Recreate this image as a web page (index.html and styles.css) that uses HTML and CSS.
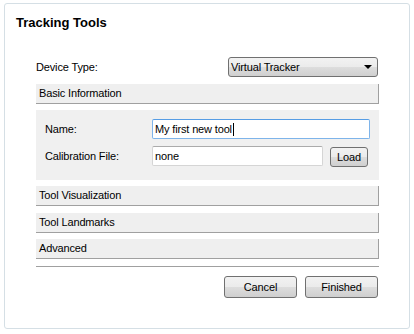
FILE: index.html
```html
<!DOCTYPE html>
<html>
<head>
<meta charset="utf-8">
<link rel="stylesheet" href="styles.css">
</head>
<body>
<div class="window">
  <div class="title">Tracking Tools</div>
  <div class="content">
    <div class="device-row">
      <span class="label">Device Type:</span>
      <div class="combo">
        <span>Virtual Tracker</span>
        <span class="arrow"></span>
      </div>
    </div>
    <div class="section first">Basic Information</div>
    <div class="panel">
      <div class="field-row">
        <span class="field-label">Name:</span>
        <div class="input focused"><span>My first new tool</span><span class="caret"></span></div>
      </div>
      <div class="field-row">
        <span class="field-label">Calibration File:</span>
        <div class="input short"><span>none</span></div>
        <div class="button load">Load</div>
      </div>
    </div>
    <div class="section">Tool Visualization</div>
    <div class="section wider-gap">Tool Landmarks</div>
    <div class="section">Advanced</div>
    <div class="separator"></div>
    <div class="buttons">
      <div class="button wide">Cancel</div>
      <div class="button wide">Finished</div>
    </div>
  </div>
</div>
</body>
</html>
```

FILE: styles.css
```css
html, body {
  margin: 0;
  padding: 0;
  background: #ffffff;
}
body {
  font-family: "Liberation Sans", Arial, sans-serif;
  font-size: 11px;
  letter-spacing: -0.15px;
  color: #000000;
}
.window {
  box-sizing: border-box;
  width: 406px;
  height: 326px;
  margin: 3px 0 0 4px;
  border: 1px solid #d5dfe5;
  border-radius: 3px;
  padding-top: 11px;
}
.title {
  padding-left: 11px;
  font-weight: bold;
  font-size: 13px;
  line-height: 16px;
  letter-spacing: 0;
}
.content {
  padding: 0 30px 0 31px;
  margin-top: 26px;
}
.device-row {
  display: flex;
  justify-content: space-between;
  align-items: center;
  height: 20px;
}
.combo {
  box-sizing: border-box;
  width: 150px;
  height: 20px;
  margin-right: 1px;
  border: 1px solid #707070;
  border-radius: 3px;
  background: linear-gradient(#f2f2f2 0%, #ebebeb 50%, #dddddd 51%, #cfcfcf 100%);
  display: flex;
  align-items: center;
  justify-content: space-between;
  padding: 0 5px 0 2px;
}
.arrow {
  width: 0;
  height: 0;
  border-left: 4px solid transparent;
  border-right: 4px solid transparent;
  border-top: 4px solid #000000;
}
.section {
  box-sizing: border-box;
  height: 20px;
  margin-top: 6px;
  background: #efefef;
  border-bottom: 1px solid #a0a0a0;
  border-right: 1px solid #a0a0a0;
  padding-left: 3px;
  line-height: 19px;
}
.section.first {
  margin-top: 7px;
}
.section.wider-gap {
  margin-top: 7px;
}
.panel {
  box-sizing: border-box;
  height: 70px;
  margin-top: 6px;
  background: #f0f0f0;
  padding: 9px 9px 0 9px;
  display: flex;
  flex-direction: column;
  gap: 7px;
}
.field-row {
  display: flex;
  align-items: center;
  height: 20px;
}
.field-label {
  width: 107px;
  flex: none;
}
.input {
  box-sizing: border-box;
  flex: 1;
  height: 20px;
  background: #ffffff;
  border: 1px solid #d5d5d5;
  border-top-color: #ababab;
  border-radius: 2px;
  display: flex;
  align-items: center;
  padding-left: 2px;
}
.input.focused {
  border-color: #7eb4ea;
  border-top-color: #569de5;
}
.input.short {
  flex: none;
  width: 171px;
}
.caret {
  width: 1px;
  height: 13px;
  background: #000000;
  margin-left: 1px;
}
.button {
  box-sizing: border-box;
  border: 1px solid #707070;
  border-radius: 3px;
  background: linear-gradient(#f2f2f2 0%, #ebebeb 50%, #dddddd 51%, #cfcfcf 100%);
  display: flex;
  align-items: center;
  justify-content: center;
}
.button.load {
  width: 38px;
  height: 20px;
  margin-left: 7px;
  margin-top: 2px;
}
.separator {
  height: 1px;
  background: #a0a0a0;
  margin-top: 7px;
}
.buttons {
  display: flex;
  justify-content: flex-end;
  gap: 8px;
  margin-top: 9px;
  padding-right: 1px;
}
.button.wide {
  width: 73px;
  height: 22px;
}
```
